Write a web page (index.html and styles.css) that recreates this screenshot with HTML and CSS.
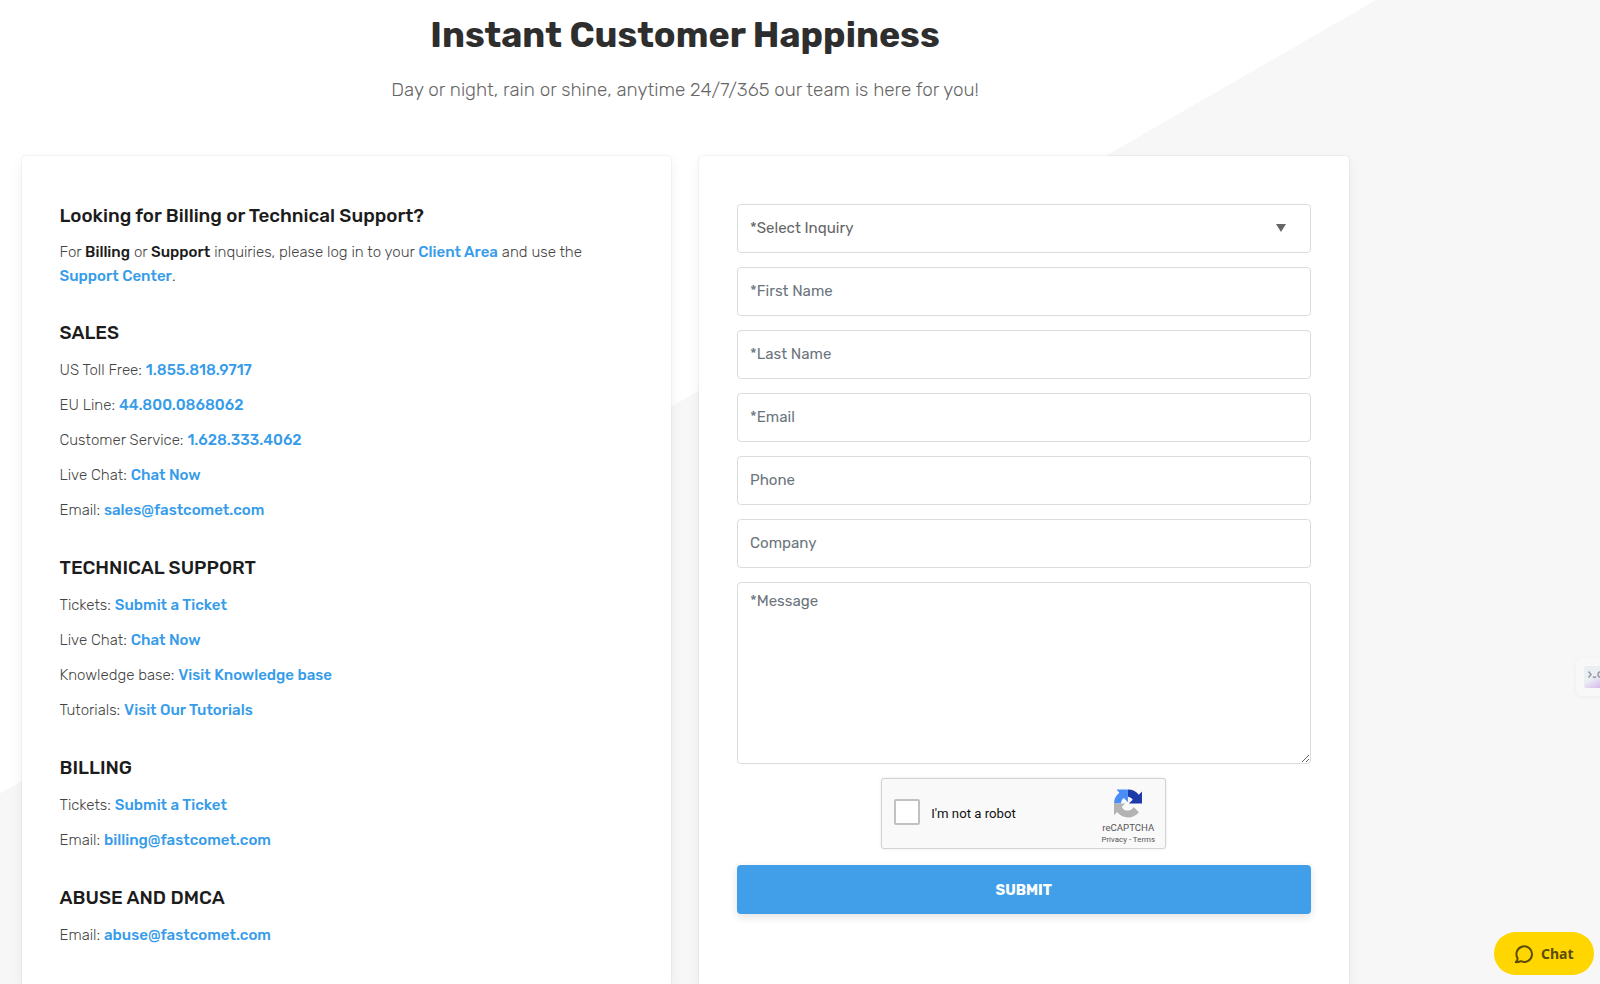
FILE: index.html
```
<!DOCTYPE html>
<html lang="en">
<head>
    <meta charset="utf-8">
    <title>Contact Us</title>
    <link rel="stylesheet" href="styles.css">
</head>
<body>
    <div class="bg-shape"></div>

    <div class="container">
        <header class="page-header">
            <h1>Instant Customer Happiness</h1>
            <p>Day or night, rain or shine, anytime 24/7/365 our team is here for you!</p>
        </header>

        <div class="columns">
            <div class="card info">
                <h3 class="lead-title">Looking for Billing or Technical Support?</h3>
                <p class="intro">For <strong>Billing</strong> or <strong>Support</strong> inquiries, please log in to your <a href="#">Client Area</a> and use the <br><a href="#">Support Center</a>.</p>

                <h3>SALES</h3>
                <ul>
                    <li>US Toll Free: <a href="#">1.855.818.9717</a></li>
                    <li>EU Line: <a href="#">44.800.0868062</a></li>
                    <li>Customer Service: <a href="#">1.628.333.4062</a></li>
                    <li>Live Chat: <a href="#">Chat Now</a></li>
                    <li>Email: <a href="#">sales@fastcomet.com</a></li>
                </ul>

                <h3>TECHNICAL SUPPORT</h3>
                <ul>
                    <li>Tickets: <a href="#">Submit a Ticket</a></li>
                    <li>Live Chat: <a href="#">Chat Now</a></li>
                    <li>Knowledge base: <a href="#">Visit Knowledge base</a></li>
                    <li>Tutorials: <a href="#">Visit Our Tutorials</a></li>
                </ul>

                <h3>BILLING</h3>
                <ul>
                    <li>Tickets: <a href="#">Submit a Ticket</a></li>
                    <li>Email: <a href="#">billing@fastcomet.com</a></li>
                </ul>

                <h3>ABUSE AND DMCA</h3>
                <ul>
                    <li>Email: <a href="#">abuse@fastcomet.com</a></li>
                </ul>
            </div>

            <form class="card contact-form">
                <div class="select-wrap">
                    <select class="field">
                        <option>*Select Inquiry</option>
                    </select>
                    <svg class="arrow" width="10" height="8" viewBox="0 0 10 8"><path d="M0 0h10L5 8z" fill="#666"/></svg>
                </div>
                <input class="field" type="text" placeholder="*First Name">
                <input class="field" type="text" placeholder="*Last Name">
                <input class="field" type="text" placeholder="*Email">
                <input class="field" type="text" placeholder="Phone">
                <input class="field" type="text" placeholder="Company">
                <textarea class="field message" placeholder="*Message"></textarea>

                <div class="captcha">
                    <span class="checkbox"></span>
                    <span class="captcha-label">I'm not a robot</span>
                    <div class="captcha-brand">
                        <svg width="28" height="29" viewBox="0 0 64 64">
                            <path fill="#1c3aa9" d="M64 31.95a33 33 0 0 0-.04-1.38V4.6l-7.18 7.18A31.93 31.93 0 0 0 32 0v16.5a15 15 0 0 1 4 1.3c3 1.4 5 3.2 6.8 5.8L34 32z"/>
                            <path fill="#4a8df6" d="M31.86 0H5.88l6.3 7.16A31.96 31.96 0 0 0 0 32h16c0-3 .8-5.400 2-7.500 1-2 2.300-3.600 4.300-5.100L31.860 29z"/>
                            <path fill="#b3b3b3" d="M0 32v26.600l7.180-7.180A31.930 31.930 0 0 0 32 64c10 0 19-4.600 24.800-12L45 39.900a15 15 0 0 1-4.700 5.300c-2 1.600-5 3-8.500 3-7 0-11.600-3.300-14-9L26 32z"/>
                        </svg>
                        <span class="brand-name">reCAPTCHA</span>
                        <span class="brand-links">Privacy - Terms</span>
                    </div>
                </div>

                <button type="button" class="submit">SUBMIT</button>
            </form>
        </div>
    </div>

    <div class="side-widget">
        <div class="side-icon">
            <svg width="24" height="22" viewBox="0 0 24 22" fill="none" stroke="#9a9ca6" stroke-width="1.600"><path d="M4.500 5.500L7 8.500l-2.500 3M9 10.500q1.500 1.800 3 0M18 5.500q-4 0-4 3t4 3"/></svg>
        </div>
    </div>

    <div class="chat-button">
        <svg width="20" height="20" viewBox="0 0 20 20" fill="none" stroke="#5a4b08" stroke-width="2" stroke-linejoin="round"><path d="M3.600 14.200A7.800 7.800 0 1 1 7 17.200Q5 18.300 1.800 18.100Q3.700 16.500 3.600 14.200z"/></svg>
        <span>Chat</span>
    </div>
</body>
</html>
```
FILE: styles.css
```
:root {
    --blue: #369ce9;
    --button: #409fe8;
    --dark: #1c1c1c;
    --border: #dcdcdc;
}

* {
    box-sizing: border-box;
}

body {
    margin: 0;
    height: 984px;
    overflow: hidden;
    position: relative;
    background: #fff;
    color: #444;
    font-family: Rubik, Roboto, sans-serif;
    font-size: 15.07px;
    line-height: 24.5px;
}

/* diagonal grey area behind the cards */
.bg-shape {
    position: absolute;
    inset: 0;
    background: #f7f7f7;
    clip-path: polygon(1376px 0, 100% 0, 100% 100%, 0 100%, 0 793.5px);
}

.container {
    position: relative;
    width: 1327px;
    margin-left: 21.5px;
}

.page-header {
    height: 156px;
    padding-top: 12.5px;
    text-align: center;
}

h1 {
    margin: 0;
    color: #2e2e2e;
    font-size: 35.75px;
    font-weight: 700;
    line-height: 44px;
}

.page-header p {
    margin: 19px 0 0;
    color: #666;
    font-size: 18.84px;
    font-weight: 300;
    line-height: 28px;
}

.columns {
    display: grid;
    grid-template-columns: 1fr 1fr;
    gap: 28px;
}

.card {
    height: 828px;
    padding: 48px 38px 0;
    background: #fff;
    border-radius: 4px 4px 0 0;
    box-shadow: 0 0 2px rgba(0, 0, 0, 0.12), 0 4px 14px rgba(0, 0, 0, 0.06);
}

h3 {
    margin: 33px 0 13px;
    color: var(--dark);
    font-size: 18.84px;
    font-weight: 500;
    line-height: 24px;
}

.lead-title {
    margin-top: 0;
    margin-bottom: 11.5px;
}

.info {
    font-weight: 300;
}

.intro {
    margin: 0 0 32px;
}

.intro + h3 {
    margin-top: 31px;
}

.info strong {
    color: var(--dark);
    font-weight: 500;
}

a {
    color: var(--blue);
    font-weight: 500;
    text-decoration: none;
}

ul {
    margin: 0;
    padding: 0;
    list-style: none;
}

li {
    margin-bottom: 10.7px;
}

.contact-form {
    display: flex;
    flex-direction: column;
    gap: 14px;
}

.field {
    display: block;
    width: 100%;
    height: 49px;
    flex-shrink: 0;
    padding: 0 12px 1px;
    border: 1px solid var(--border);
    border-radius: 4px;
    background: #fff;
    color: #666;
    font: 400 15.07px Rubik, Roboto, sans-serif;
    appearance: none;
}

.field::placeholder {
    color: #6c757d;
}

.select-wrap {
    position: relative;
}

.arrow {
    position: absolute;
    top: 20px;
    right: 25px;
}

.message {
    height: 182px;
    padding-top: 9px;
}

.captcha {
    display: flex;
    align-items: center;
    align-self: center;
    width: 285px;
    height: 71px;
    padding: 0 9px 0 12px;
    border: 1px solid #d3d3d3;
    border-radius: 3px;
    background: #f9f9f9;
    box-shadow: 0 0 3px rgba(0, 0, 0, 0.1);
    font-family: Roboto, sans-serif;
}

.checkbox {
    width: 26px;
    height: 26px;
    margin-bottom: 3px;
    border: 2px solid #c1c1c1;
    border-radius: 2px;
    background: #fff;
}

.captcha-label {
    flex: 1;
    margin-left: 11px;
    padding-top: 1px;
    color: #111;
    font-size: 13.2px;
}

.captcha-brand {
    display: flex;
    flex-direction: column;
    align-items: center;
    width: 56px;
    padding-top: 6px;
    color: #555;
    white-space: nowrap;
}

.brand-name {
    margin-top: 4px;
    font-size: 9.6px;
    line-height: 12px;
}

.brand-links {
    font-size: 7.9px;
    line-height: 11px;
}

.submit {
    height: 49px;
    margin-top: 2px;
    border: none;
    border-radius: 4px;
    background: var(--button);
    box-shadow: 0 3px 8px rgba(0, 0, 0, 0.12);
    color: #fff;
    font: 700 14.6px Rubik, Roboto, sans-serif;
}

.side-widget {
    position: absolute;
    top: 658px;
    right: 0;
    width: 24px;
    height: 38px;
    padding: 8px 0 8px 8px;
    border-radius: 6px 0 0 6px;
    background: #f8f8f8;
    box-shadow: 0 1px 4px rgba(0, 0, 0, 0.05);
    overflow: hidden;
}

.side-icon {
    height: 22px;
    border-radius: 2px 0 0 2px;
    background: linear-gradient(150deg, #e9eff3 55%, #d9b8ee);
}

.chat-button {
    position: absolute;
    top: 932px;
    right: 6px;
    display: flex;
    align-items: center;
    gap: 7px;
    width: 100px;
    height: 43px;
    padding-left: 20px;
    border-radius: 22px;
    background: #ffd600;
    color: #5a4b08;
    font: 700 14px "Noto Sans", sans-serif;
}
```
